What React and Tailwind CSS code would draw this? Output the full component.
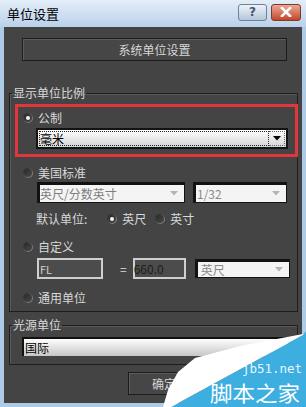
import React from "react";

function Radio({ on }) {
  return (
    <span className="w-[10px] h-[10px] rounded-full bg-gradient-to-br from-[#1a1a1a] to-[#a0a0a0] p-[1px] flex shrink-0">
      <span className="flex-1 rounded-full bg-gradient-to-br from-[#2a2a2a] to-[#4a4a4a] flex items-center justify-center">
        {on && <span className="w-[4px] h-[4px] rounded-full bg-[#f2f2f2]" />}
      </span>
    </span>
  );
}

function Arrow({ color }) {
  return (
    <svg width="8" height="5" viewBox="0 0 8 5">
      <polygon points="0,0 8,0 4,4.5" fill={color} />
    </svg>
  );
}

function RadioRow({ on, label, cls }) {
  return (
    <div className={`flex items-center h-[14px] ${cls}`}>
      <Radio on={on} />
      <span className="ml-[5px] text-[#d9d9d9]">{label}</span>
    </div>
  );
}

export default function App() {
  return (
    <div className="w-[306px] h-[407px] relative overflow-hidden bg-[#aecbe6] font-['Noto_Sans_CJK_SC','Liberation_Sans',sans-serif] text-[12px] leading-[14px]">
      {/* title bar */}
      <div className="h-[27px] flex items-center pl-[7px] pr-[5px] bg-gradient-to-b from-[#e4eef8] to-[#bad1ea]">
        <span className="text-[13px] text-black">单位设置</span>
        <div className="ml-auto flex gap-[4px] -mt-[3px]">
          <div className="w-[29px] h-[17px] rounded-[3px] border border-[#6f8298] bg-gradient-to-b from-[#eef3f9] to-[#b3c6db] flex items-center justify-center text-[#4a5566] text-[12px] font-bold font-['DejaVu_Sans',sans-serif]">
            ?
          </div>
          <div className="w-[30px] h-[17px] rounded-[3px] border border-[#803a2a] bg-gradient-to-b from-[#eaa996] to-[#c3432a] flex items-center justify-center">
            <svg width="12" height="10" viewBox="0 0 12 10">
              <path d="M2 1 L10 9 M10 1 L2 9" stroke="#ffffff" strokeWidth="2.6" strokeLinecap="square" />
            </svg>
          </div>
        </div>
      </div>

      {/* body */}
      <div className="mx-[4px] h-[376px] bg-[#444444] flex flex-col">
        <div className="mt-[11px] ml-[18px] w-[265px] h-[23px] border border-[#1c1c1c] shadow-[inset_1px_1px_0_#5c5c5c] bg-[#464646] flex items-center justify-center text-[#d6d6d6]">
          系统单位设置
        </div>

        {/* group 1 */}
        <fieldset className="mt-[25px] ml-[5px] w-[289px] border border-[#1e1e1e] shadow-[inset_1px_1px_0_#5a5a5a] p-0">
          <legend className="ml-[2px] px-[1px] text-[#d9d9d9] leading-[14px]">显示单位比例</legend>
          <div className="flex flex-col">
            <div className="relative mt-[11px]">
              <RadioRow on label="公制" cls="ml-[13px]" />
              <div className="mt-[3px] ml-[26px] w-[252px] h-[21px] border-2 border-[#141414] bg-gradient-to-b from-[#ffffff] to-[#d4d4d4] flex p-[1px]">
                <div className="flex-1 border border-dotted border-[#222] flex items-center text-black leading-[12px]">毫米</div>
                <div className="w-[16px] flex items-center justify-center border border-dotted border-[#666] border-l-0">
                  <Arrow color="#000" />
                </div>
              </div>
              <div className="absolute left-[5px] top-[-7px] w-[283px] h-[53px] border-[3px] border-[#e2353c]" />
            </div>

            <RadioRow on={false} label="美国标准" cls="ml-[13px] mt-[17px]" />
            <div className="flex mt-[2px] ml-[27px] gap-[8px]">
              <div className="w-[148px] h-[21px] border-t-[3px] border-l-[3px] border-r border-b border-[#121212] bg-[#f4f4f4] flex items-center justify-between pr-[6px] text-[#7e7e7e]">
                <span>英尺/分数英寸</span>
                <Arrow color="#b4b4b4" />
              </div>
              <div className="w-[94px] h-[21px] border-t-[3px] border-l-[3px] border-r border-b border-[#121212] bg-[#f4f4f4] flex items-center justify-between pl-[1px] pr-[6px] text-[#8a8a8a]">
                <span>1/32</span>
                <Arrow color="#b4b4b4" />
              </div>
            </div>
            <div className="flex items-center h-[14px] mt-[9px] ml-[26px] text-[#d9d9d9]">
              <span>默认单位:</span>
              <span className="ml-[20px]"><Radio on /></span>
              <span className="ml-[5px]">英尺</span>
              <span className="ml-[9px]"><Radio on={false} /></span>
              <span className="ml-[5px]">英寸</span>
            </div>

            <RadioRow on={false} label="自定义" cls="ml-[13px] mt-[14px]" />
            <div className="flex items-center mt-[4px] ml-[27px] h-[21px]">
              <div className="w-[66px] h-[21px] border-2 border-[#cfcfcf] bg-[#4c4c4c] flex items-center text-[#d0d0d0] text-[11px] pl-[1px]">FL</div>
              <span className="ml-[17px] text-[#d9d9d9]">=</span>
              <div className="ml-[6px] w-[53px] h-[21px] border-2 border-[#cfcfcf] bg-[#4c4c4c] flex items-center text-[#1c1c1c] -indent-[1px]">660.0</div>
              <div className="ml-[9px] w-[95px] h-[19px] border-t-[3px] border-l-[3px] border-r border-b border-[#121212] bg-[#f4f4f4] flex items-center justify-between pl-[3px] pr-[6px] text-[#8a8a8a]">
                <span>英尺</span>
                <Arrow color="#b4b4b4" />
              </div>
            </div>

            <RadioRow on={false} label="通用单位" cls="ml-[13px] mt-[12px] mb-[6px]" />
          </div>
        </fieldset>

        {/* group 2 */}
        <fieldset className="mt-[6px] ml-[5px] w-[289px] border border-[#1e1e1e] shadow-[inset_1px_1px_0_#5a5a5a] p-0">
          <legend className="ml-[2px] px-[1px] text-[#d9d9d9] leading-[14px]">光源单位</legend>
          <div className="mt-[5px] mb-[8px] ml-[12px] w-[266px] h-[19px] border-t-2 border-l-2 border-[#111] bg-gradient-to-b from-[#ffffff] to-[#c6c6c6] flex items-center text-black pl-[1px]">
            国际
          </div>
        </fieldset>

        <div className="mt-[7px] ml-[124px] w-[72px] h-[23px] border border-[#1c1c1c] shadow-[inset_1px_1px_0_#5c5c5c] bg-[#464646] flex items-center justify-center text-[#d6d6d6]">
          确定
        </div>
      </div>

      {/* watermark overlay */}
      <svg className="absolute right-0 bottom-0" width="145" height="80" viewBox="0 0 145 80">
        <polygon points="145,4 145,80 10,80 142,8" fill="#3caee0" />
        <polygon points="142,7 79,19 34,31 17,45 7,63 2,80 10,80 142,8" fill="#ffffff" />
        <text x="81" y="46" fill="#e8f6fd" fontSize="13" fontFamily="DejaVu Sans Mono, monospace" textLength="60" lengthAdjust="spacingAndGlyphs">jb51.net</text>
        <text x="49" y="74" fill="#ffffff" fontSize="21" fontFamily="Noto Sans CJK SC, sans-serif" textLength="90" lengthAdjust="spacingAndGlyphs">脚本之家</text>
      </svg>
    </div>
  );
}
